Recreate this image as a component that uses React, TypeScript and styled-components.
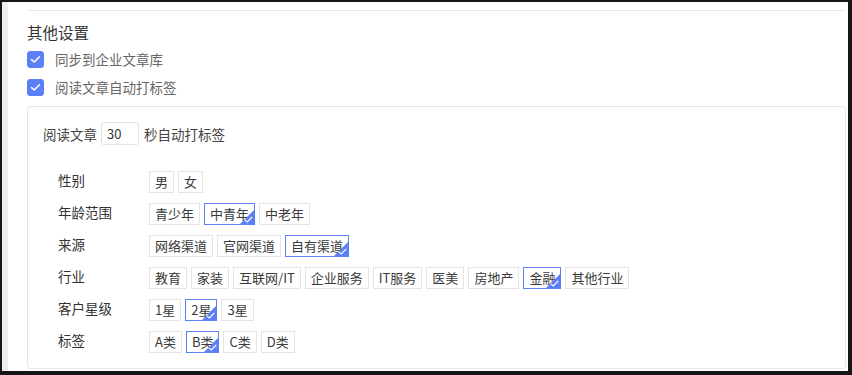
import React, { useState } from 'react';
import styled, { createGlobalStyle, css } from 'styled-components';

const GlobalStyle = createGlobalStyle`
  html, body {
    margin: 0;
    padding: 0;
    background: #ffffff;
  }
  body {
    font-family: "Noto Sans CJK SC", "Noto Sans", sans-serif;
    color: #333;
  }
`;

const BLUE = '#5b7ff6';

const Frame = styled.div`
  width: 852px;
  height: 375px;
  box-sizing: border-box;
  border-style: solid;
  border-color: #161616;
  border-width: 2px 4px 4px 2px;
  display: flex;
  background: #fff;
  overflow: hidden;
`;

const Gutter = styled.div`
  width: 6px;
  flex-shrink: 0;
  background: #eceef1;
`;

const Content = styled.div`
  flex: 1;
  display: flex;
  flex-direction: column;
  padding: 8px 2px 2px 19px;
  min-width: 0;
`;

const Section = styled.section`
  flex: 1;
  display: flex;
  flex-direction: column;
  border-top: 1px solid #e8e8e8;
  padding-top: 10px;
`;

const Heading = styled.h3`
  margin: 0;
  font-size: 15.5px;
  font-weight: 400;
  line-height: 22px;
  color: #333;
`;

const CheckRow = styled.label`
  display: flex;
  align-items: center;
  gap: 11px;
  height: 22px;
  margin-top: 6px;
  font-size: 13.5px;
  color: #666;
  cursor: pointer;

  &:first-of-type {
    margin-top: 5px;
  }
`;

const Box = styled.span<{ $checked: boolean }>`
  width: 17px;
  height: 17px;
  box-sizing: border-box;
  border-radius: 3px;
  display: inline-flex;
  align-items: center;
  justify-content: center;
  ${({ $checked }) =>
    $checked
      ? css`
          background: ${BLUE};
          border: 1px solid ${BLUE};
        `
      : css`
          background: #fff;
          border: 1px solid #d9d9d9;
        `}
`;

const Panel = styled.div`
  flex: 1;
  margin-top: 8px;
  border: 1px solid #e6e6e6;
  border-radius: 4px;
  padding: 15px 15px 0 15px;
`;

const AutoTagLine = styled.div`
  display: flex;
  align-items: center;
  height: 23px;
  font-size: 13.5px;
  color: #444;
`;

const SecondsInput = styled.input`
  width: 38px;
  height: 23px;
  box-sizing: border-box;
  margin: 0 5px 0 4px;
  padding: 0 5px;
  border: 1px solid #e2e2e2;
  border-radius: 3px;
  font-family: inherit;
  font-size: 13px;
  color: #333;
  outline: none;
`;

const TagTable = styled.div`
  margin-top: 26px;
  padding-left: 15px;
  display: flex;
  flex-direction: column;
  gap: 10px;
`;

const TagRow = styled.div`
  display: flex;
  align-items: flex-start;
`;

const RowLabel = styled.div`
  width: 91px;
  flex-shrink: 0;
  font-size: 13.5px;
  line-height: 18px;
  color: #333;
`;

const Tags = styled.div`
  display: flex;
  gap: 4px;
`;

const Tag = styled.button<{ $active: boolean }>`
  position: relative;
  height: 22px;
  box-sizing: border-box;
  padding: 0 5px;
  background: #fff;
  border: 1px solid ${({ $active }) => ($active ? BLUE : '#e4e4e4')};
  font-family: inherit;
  font-size: 13px;
  line-height: 20px;
  color: #3a3a3a;
  cursor: pointer;
  overflow: hidden;

  ${({ $active }) =>
    $active &&
    css`
      &::after {
        content: '';
        position: absolute;
        right: 0;
        bottom: 0;
        border-style: solid;
        border-width: 7.5px;
        border-color: transparent ${BLUE} ${BLUE} transparent;
      }
    `}
`;

const Corner = styled.svg`
  position: absolute;
  right: 1px;
  bottom: 1px;
  width: 9px;
  height: 7px;
  z-index: 1;
`;

const Check = () => (
  <svg width="11" height="9" viewBox="0 0 11 9">
    <path d="M1.5 4.6 L4.2 7 L9.5 1.8" fill="none" stroke="#fff" strokeWidth="1.5" strokeLinecap="round" strokeLinejoin="round" />
  </svg>
);

type Group = { label: string; options: string[]; selected?: string };

const groups: Group[] = [
  { label: '性别', options: ['男', '女'] },
  { label: '年龄范围', options: ['青少年', '中青年', '中老年'], selected: '中青年' },
  { label: '来源', options: ['网络渠道', '官网渠道', '自有渠道'], selected: '自有渠道' },
  {
    label: '行业',
    options: ['教育', '家装', '互联网/IT', '企业服务', 'IT服务', '医美', '房地产', '金融', '其他行业'],
    selected: '金融',
  },
  { label: '客户星级', options: ['1星', '2星', '3星'], selected: '2星' },
  { label: '标签', options: ['A类', 'B类', 'C类', 'D类'], selected: 'B类' },
];

const App = () => {
  const [sync, setSync] = useState(true);
  const [autoTag, setAutoTag] = useState(true);
  const [seconds, setSeconds] = useState('30');
  const [picked, setPicked] = useState<Record<string, string | undefined>>(
    Object.fromEntries(groups.map((g) => [g.label, g.selected]))
  );

  return (
    <>
      <GlobalStyle />
      <Frame>
        <Gutter />
        <Content>
          <Section>
            <Heading>其他设置</Heading>
            <CheckRow onClick={() => setSync(!sync)}>
              <Box $checked={sync}>{sync && <Check />}</Box>
              同步到企业文章库
            </CheckRow>
            <CheckRow onClick={() => setAutoTag(!autoTag)}>
              <Box $checked={autoTag}>{autoTag && <Check />}</Box>
              阅读文章自动打标签
            </CheckRow>
            <Panel>
              <AutoTagLine>
                阅读文章
                <SecondsInput value={seconds} onChange={(e) => setSeconds(e.target.value)} />
                秒自动打标签
              </AutoTagLine>
              <TagTable>
                {groups.map((g) => (
                  <TagRow key={g.label}>
                    <RowLabel>{g.label}</RowLabel>
                    <Tags>
                      {g.options.map((o) => {
                        const active = picked[g.label] === o;
                        return (
                          <Tag
                            key={o}
                            $active={active}
                            onClick={() => setPicked({ ...picked, [g.label]: active ? undefined : o })}
                          >
                            {o}
                            {active && (
                              <Corner viewBox="0 0 9 7">
                                <path d="M0.8 3.8 L3.3 6 L8.2 1" fill="none" stroke="#fff" strokeWidth="1.1" />
                              </Corner>
                            )}
                          </Tag>
                        );
                      })}
                    </Tags>
                  </TagRow>
                ))}
              </TagTable>
            </Panel>
          </Section>
        </Content>
      </Frame>
    </>
  );
};

export default App;
